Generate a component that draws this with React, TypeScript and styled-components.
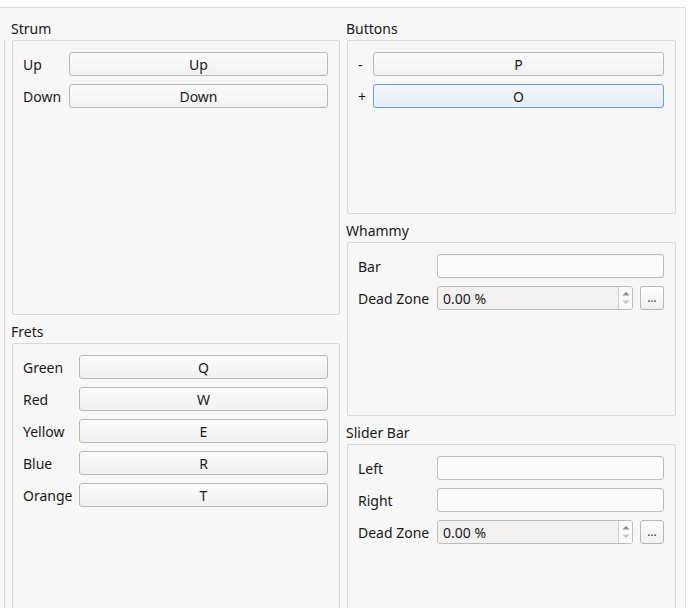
import React from "react"
import styled, { createGlobalStyle } from "styled-components"

const colors = {
  page: "#f8f8f8",
  frame: "#dedede",
  box: "#dadada",
  text: "#1a1a1a",
  btnBorder: "#b8b8b8",
  focus: "#6aa2df",
}

const GlobalStyle = createGlobalStyle`
  html, body {
    margin: 0;
    padding: 0;
    background: #ffffff;
    overflow: hidden;
  }
  body {
    font-family: "Noto Sans", "DejaVu Sans", sans-serif;
    font-size: 14px;
    color: ${colors.text};
  }
`

type Row = { label: string; key?: string; kind?: "key" | "edit" | "spin"; focused?: boolean }

type GroupProps = {
  title: string
  height: number
  labelWidth?: number
  rows: Row[]
}

const Group: React.FC<GroupProps> = function Group({ title, height, labelWidth, rows }) {
  return (
    <GroupWrap>
      <GroupTitle>{title}</GroupTitle>
      <GroupBox $height={height}>
        <Form $labelWidth={labelWidth}>
          {rows.map((row, i) => (
            <React.Fragment key={i}>
              <Label>{row.label}</Label>
              {(row.kind ?? "key") === "key" && <KeyButton $focused={row.focused}>{row.key}</KeyButton>}
              {row.kind === "edit" && <LineEdit />}
              {row.kind === "spin" && (
                <SpinRow>
                  <SpinBox>
                    <span className="value">0.00 %</span>
                    <span className="arrows">
                      <svg width="8" height="5" viewBox="0 0 8 5">
                        <path d="M0.5 4.5 L4 0.8 L7.5 4.5 Z" fill="#8f8f8f" />
                      </svg>
                      <svg width="8" height="5" viewBox="0 0 8 5">
                        <path d="M0.5 0.5 L4 4.2 L7.5 0.5 Z" fill="#c6c6c6" />
                      </svg>
                    </span>
                  </SpinBox>
                  <DotsButton>...</DotsButton>
                </SpinRow>
              )}
            </React.Fragment>
          ))}
        </Form>
      </GroupBox>
    </GroupWrap>
  )
}

export default function App() {
  return (
    <>
      <GlobalStyle />
      <Page>
        <span />
        <Edge />
        <Content>
          <Column>
            <Group
              title="Strum"
              height={275}
              labelWidth={39}
              rows={[
                { label: "Up", key: "Up" },
                { label: "Down", key: "Down" },
              ]}
            />
            <Group
              title="Frets"
              height={300}
              labelWidth={49}
              rows={[
                { label: "Green", key: "Q" },
                { label: "Red", key: "W" },
                { label: "Yellow", key: "E" },
                { label: "Blue", key: "R" },
                { label: "Orange", key: "T" },
              ]}
            />
          </Column>
          <Column>
            <Group
              title="Buttons"
              height={174}
              labelWidth={8}
              rows={[
                { label: "-", key: "P" },
                { label: "+", key: "O", focused: true },
              ]}
            />
            <Group
              title="Whammy"
              height={174}
              labelWidth={72}
              rows={[
                { label: "Bar", kind: "edit" },
                { label: "Dead Zone", kind: "spin" },
              ]}
            />
            <Group
              title="Slider Bar"
              height={300}
              labelWidth={72}
              rows={[
                { label: "Left", kind: "edit" },
                { label: "Right", kind: "edit" },
                { label: "Dead Zone", kind: "spin" },
              ]}
            />
          </Column>
        </Content>
      </Page>
    </>
  )
}

const Page = styled.div`
  margin-top: 7px;
  width: 686px;
  height: 601px;
  box-sizing: border-box;
  border-top: 1px solid ${colors.frame};
  border-right: 1px solid ${colors.frame};
  background: ${colors.page};
  display: grid;
  grid-template-columns: 4px 1px 1fr;
  overflow: hidden;
`

const Edge = styled.div`
  margin-top: 32px;
  background: ${colors.box};
`

const Content = styled.div`
  padding: 9px 9px 0 7px;
  display: grid;
  grid-template-columns: 328px 329px;
  column-gap: 7px;
  align-items: start;
`

const Column = styled.div`
  display: flex;
  flex-direction: column;
  gap: 5px;
`

const GroupWrap = styled.section`
  display: flex;
  flex-direction: column;
`

const GroupTitle = styled.div`
  line-height: 20px;
  height: 20px;
  padding-top: 2px;
  margin-bottom: 1px;
  margin-left: -1px;
`

const GroupBox = styled.div<{ $height: number }>`
  height: ${(p) => p.$height}px;
  box-sizing: border-box;
  border: 1px solid ${colors.box};
  border-radius: 2px;
  background: #f7f7f7;
  padding: 11px 11px 0 10px;
`

const Form = styled.div<{ $labelWidth?: number }>`
  display: grid;
  grid-template-columns: ${(p) => (p.$labelWidth ? `${p.$labelWidth}px` : "auto")} 1fr;
  column-gap: 7px;
  row-gap: 8px;
  align-items: center;
`

const Label = styled.div`
  line-height: 23px;
  padding-top: 1px;
  white-space: nowrap;
`

const KeyButton = styled.div<{ $focused?: boolean }>`
  height: 24px;
  box-sizing: border-box;
  border: 1px solid ${(p) => (p.$focused ? colors.focus : colors.btnBorder)};
  border-radius: 3px;
  background: ${(p) =>
    p.$focused
      ? "linear-gradient(#f3f6fa, #e6edf7)"
      : "linear-gradient(#fcfcfc, #f1f1f1)"};
  text-align: center;
  line-height: 21px;
  padding-top: 1px;
`

const LineEdit = styled.div`
  height: 24px;
  box-sizing: border-box;
  border: 1px solid #bdbdbd;
  border-radius: 3px;
  background: linear-gradient(#f6f6f6, #fcfcfc 3px, #fcfcfc);
`

const SpinRow = styled.div`
  display: flex;
  gap: 7px;
`

const SpinBox = styled.div`
  flex: 1;
  height: 24px;
  box-sizing: border-box;
  border: 1px solid #bdbdbd;
  border-radius: 3px;
  background: #f2f1ef;
  display: flex;
  overflow: hidden;
  > .value {
    flex: 1;
    padding: 1px 0 0 5px;
    line-height: 21px;
  }
  > .arrows {
    width: 13px;
    border-left: 1px solid #d0d0d0;
    background: #f9f9f9;
    display: flex;
    flex-direction: column;
    align-items: center;
    justify-content: center;
    gap: 4px;
  }
`

const DotsButton = styled.div`
  width: 24px;
  height: 24px;
  box-sizing: border-box;
  border: 1px solid ${colors.btnBorder};
  border-radius: 3px;
  background: linear-gradient(#fcfcfc, #f1f1f1);
  text-align: center;
  line-height: 22px;
  font-size: 12px;
  color: #2a3a5a;
`
